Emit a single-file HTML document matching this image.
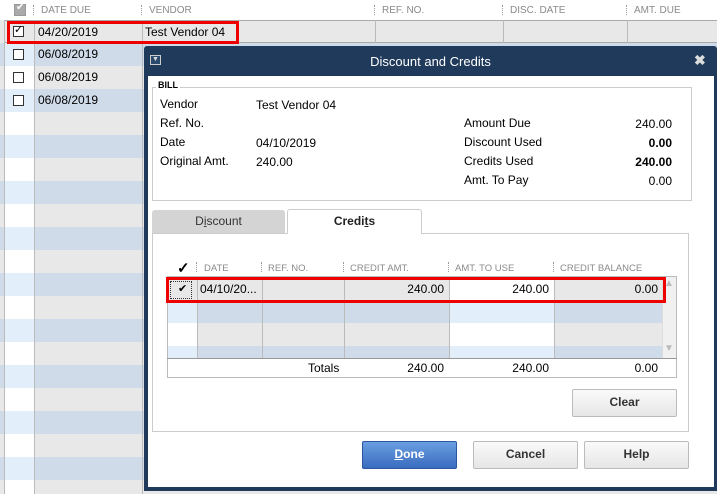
<!DOCTYPE html>
<html><head><style>
*{margin:0;padding:0;box-sizing:border-box}
body{width:717px;height:494px;overflow:hidden;background:#fff;font-family:"Liberation Sans",Arial,sans-serif;font-size:12px;color:#000;position:relative}
.a{position:absolute}
.hdr{color:#8a8a8a;font-size:10px;top:5px}
.sep{border-left:1px dotted #999;height:10px;top:5px;width:1px}
.cb{width:11px;height:11px;border:1px solid #333;background:#fff}
.btn{position:absolute;border:1px solid #bbb;border-radius:2px;background:linear-gradient(#fafafa,#e6e6e6);text-align:center;line-height:25px;font-size:12px;font-weight:bold;color:#333}
.gh{color:#8a8a8a;font-size:9.5px;top:263px}
.vl{width:1px;height:82px;background:#bbb;top:276px}
</style></head><body>
<div class="a" style="left:14px;top:4px;width:12px;height:12px;background:#aaa;border:1px solid #999"></div>
<div class="a" style="left:16px;top:2px;color:#fff;font-size:10px">✔</div>
<div class="a sep" style="left:33px"></div><div class="a hdr" style="left:41px">DATE DUE</div>
<div class="a sep" style="left:141px"></div><div class="a hdr" style="left:149px">VENDOR</div>
<div class="a sep" style="left:374px"></div><div class="a hdr" style="left:382px">REF. NO.</div>
<div class="a sep" style="left:502px"></div><div class="a hdr" style="left:510px">DISC. DATE</div>
<div class="a sep" style="left:626px"></div><div class="a hdr" style="left:634px">AMT. DUE</div>
<div class="a" style="left:0;top:20px;width:717px;height:474px;background:repeating-linear-gradient(#e8e8e8 0 23px,#cfdbe8 23px 46px)"></div>
<div class="a" style="left:5px;top:43px;width:29px;height:451px;background:repeating-linear-gradient(#e3eefb 0 23px,#fff 23px 46px)"></div>
<div class="a" style="left:5px;top:20px;width:712px;height:23px;background:#e8e8e8;border-top:1px solid #aaa;border-bottom:1px solid #aaa"></div>
<div class="a" style="left:4px;top:20px;width:1px;height:474px;background:#bbb"></div>
<div class="a" style="left:34px;top:20px;width:1px;height:474px;background:#bbb"></div>
<div class="a" style="left:142px;top:20px;width:1px;height:474px;background:#bbb"></div>
<div class="a" style="left:375px;top:20px;width:1px;height:23px;background:#bbb"></div>
<div class="a" style="left:503px;top:20px;width:1px;height:23px;background:#bbb"></div>
<div class="a" style="left:627px;top:20px;width:1px;height:23px;background:#bbb"></div>
<div class="a cb" style="left:13px;top:26px"></div><div class="a" style="left:14px;top:23px;font-size:11px">✓</div>
<div class="a cb" style="left:13px;top:49px"></div>
<div class="a cb" style="left:13px;top:72px"></div>
<div class="a cb" style="left:13px;top:95px"></div>
<div class="a" style="left:38px;top:25px">04/20/2019</div>
<div class="a" style="left:38px;top:47px">06/08/2019</div>
<div class="a" style="left:38px;top:70px">06/08/2019</div>
<div class="a" style="left:38px;top:93px">06/08/2019</div>
<div class="a" style="left:145px;top:25px">Test Vendor 04</div>
<div class="a" style="left:7px;top:21px;width:232px;height:23px;border:3px solid #e00"></div>
<!-- dialog -->
<div class="a" style="left:144px;top:46px;width:573px;height:445px;background:#1f3a5a;border-radius:3px 3px 0 0"></div>
<div class="a" style="left:148px;top:76px;width:566px;height:411px;background:#fff"></div>
<div class="a" style="left:150px;top:55px;width:11px;height:10px;border:1px solid #ccc;background:#2c4a6c"></div>
<div class="a" style="left:152px;top:56px;color:#ddd;font-size:7px">▼</div>
<div class="a" style="left:144px;top:54px;width:573px;text-align:center;color:#fff;font-size:13px">Discount and Credits</div>
<div class="a" style="left:694px;top:52px;color:#ddd;font-size:14px;font-weight:bold">✖</div>
<div class="a" style="left:152px;top:87px;width:540px;height:114px;border:1px solid #ccc"></div>
<div class="a" style="left:156px;top:80px;background:#fff;padding:0 2px;font-size:9px;font-weight:bold">BILL</div>
<div class="a" style="left:160px;top:97px">Vendor</div><div class="a" style="left:256px;top:98px">Test Vendor 04</div>
<div class="a" style="left:160px;top:116px">Ref. No.</div>
<div class="a" style="left:160px;top:135px">Date</div><div class="a" style="left:256px;top:136px">04/10/2019</div>
<div class="a" style="left:160px;top:154px">Original Amt.</div><div class="a" style="left:256px;top:155px">240.00</div>
<div class="a" style="left:464px;top:116px">Amount Due</div><div class="a" style="left:592px;top:117px;width:80px;text-align:right">240.00</div>
<div class="a" style="left:464px;top:135px">Discount Used</div><div class="a" style="left:592px;top:136px;width:80px;text-align:right;font-weight:bold">0.00</div>
<div class="a" style="left:464px;top:154px">Credits Used</div><div class="a" style="left:592px;top:155px;width:80px;text-align:right;font-weight:bold">240.00</div>
<div class="a" style="left:464px;top:173px">Amt. To Pay</div><div class="a" style="left:592px;top:174px;width:80px;text-align:right">0.00</div>
<div class="a" style="left:152px;top:233px;width:537px;height:199px;border:1px solid #ccc"></div>
<div class="a" style="left:152px;top:210px;width:133px;height:23px;background:#d4d4d4;border-radius:3px 3px 0 0;text-align:center;line-height:22px;color:#333">D<u>i</u>scount</div>
<div class="a" style="left:287px;top:209px;width:135px;height:25px;background:#fff;border:1px solid #ccc;border-bottom:none;border-radius:3px 3px 0 0;text-align:center;line-height:23px;font-weight:bold;color:#222">Credi<u>t</u>s</div>
<!-- credits grid -->
<div class="a" style="left:177px;top:259px;font-size:15px;font-weight:bold">✓</div>
<div class="a sep" style="left:196px;top:262px"></div><div class="a gh" style="left:204px">DATE</div>
<div class="a sep" style="left:261px;top:262px"></div><div class="a gh" style="left:268px">REF. NO.</div>
<div class="a sep" style="left:343px;top:262px"></div><div class="a gh" style="left:350px">CREDIT AMT.</div>
<div class="a sep" style="left:448px;top:262px"></div><div class="a gh" style="left:455px">AMT. TO USE</div>
<div class="a sep" style="left:553px;top:262px"></div><div class="a gh" style="left:560px">CREDIT BALANCE</div>
<div class="a" style="left:167px;top:277px;width:495px;height:81px;background:repeating-linear-gradient(#e8e8e8 0 23px,#cfdbe8 23px 46px)"></div>
<div class="a" style="left:167px;top:300px;width:30px;height:58px;background:linear-gradient(#e3eefb 0 23px,#fff 23px 46px,#e3eefb 46px)"></div>
<div class="a" style="left:450px;top:300px;width:104px;height:58px;background:linear-gradient(#e3eefb 0 23px,#fff 23px 46px,#e3eefb 46px)"></div>
<div class="a" style="left:450px;top:277px;width:104px;height:23px;background:#fff"></div>
<div class="a vl" style="left:197px"></div>
<div class="a vl" style="left:262px"></div>
<div class="a vl" style="left:344px"></div>
<div class="a vl" style="left:449px"></div>
<div class="a vl" style="left:554px"></div>
<div class="a" style="left:662px;top:277px;width:14px;height:81px;background:#f0f0f0;border-left:1px solid #ddd"></div>
<div class="a" style="left:664px;top:278px;color:#bbb;font-size:10px">▲</div>
<div class="a" style="left:664px;top:343px;color:#bbb;font-size:10px">▼</div>
<div class="a" style="left:167px;top:276px;width:510px;height:102px;border:1px solid #bbb"></div>
<div class="a" style="left:167px;top:358px;width:510px;height:1px;background:#999"></div>
<div class="a" style="left:170px;top:281px;width:22px;height:18px;border:1px dotted #333"></div>
<div class="a" style="left:178px;top:282px;font-size:11px">✔</div>
<div class="a" style="left:200px;top:282px">04/10/20...</div>
<div class="a" style="left:350px;top:282px;width:94px;text-align:right">240.00</div>
<div class="a" style="left:455px;top:282px;width:94px;text-align:right">240.00</div>
<div class="a" style="left:560px;top:282px;width:98px;text-align:right">0.00</div>
<div class="a" style="left:308px;top:361px">Totals</div>
<div class="a" style="left:350px;top:361px;width:94px;text-align:right">240.00</div>
<div class="a" style="left:455px;top:361px;width:94px;text-align:right">240.00</div>
<div class="a" style="left:560px;top:361px;width:98px;text-align:right">0.00</div>
<div class="a" style="left:166px;top:277px;width:500px;height:26px;border:3px solid #e00"></div>
<div class="btn" style="left:572px;top:389px;width:105px;height:28px">Clear</div>
<div class="btn" style="left:362px;top:441px;width:95px;height:28px;background:linear-gradient(#6a9ee0,#3a6cc0);border-color:#2c56a0;color:#fff"><u>D</u>one</div>
<div class="btn" style="left:473px;top:441px;width:105px;height:28px">Cancel</div>
<div class="btn" style="left:584px;top:441px;width:105px;height:28px">Help</div>
</body></html>
